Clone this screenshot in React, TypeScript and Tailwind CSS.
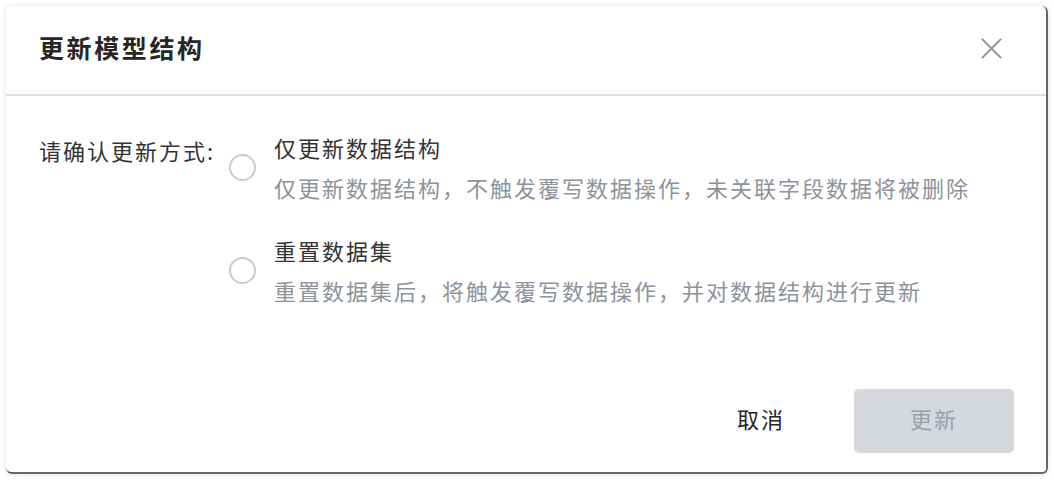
import React, { useState } from 'react';

const options = [
  {
    key: 'structure',
    title: '仅更新数据结构',
    desc: '仅更新数据结构，不触发覆写数据操作，未关联字段数据将被删除',
  },
  {
    key: 'reset',
    title: '重置数据集',
    desc: '重置数据集后，将触发覆写数据操作，并对数据结构进行更新',
  },
];

export default function App() {
  const [mode, setMode] = useState<string | null>(null);

  return (
    <div
      className="w-[1054px] h-[480px] bg-white pt-[6px] pl-[6px]"
      style={{ fontFamily: '"Noto Sans CJK SC", "Noto Sans", sans-serif' }}
    >
      <div className="w-[1042px] h-[468px] bg-white rounded-[6px] border-r-2 border-b-2 border-[#62666d] shadow-[0_0_6px_rgba(0,0,0,0.12)] flex flex-col">
        {/* Header */}
        <div className="h-[90px] flex items-center justify-between pl-[33px] pr-[43px] pb-[4px] border-b-2 border-[#dcdfe4]">
          <h2 className="text-[25px] font-bold text-[#262626] tracking-[2.6px]">更新模型结构</h2>
          <button className="text-[#8f8f8f]">
            <svg width="23" height="23" viewBox="0 0 24 24" fill="none" stroke="currentColor" strokeWidth="2">
              <path d="M2 2L22 22M22 2L2 22" />
            </svg>
          </button>
        </div>

        {/* Body */}
        <div className="flex-1 flex pl-[33px] pt-[35px]">
          <div className="text-[22px] text-[#333] tracking-[2px] leading-[32px] w-[190px] mt-[3px]">请确认更新方式:</div>
          <div className="flex flex-col gap-[31px]">
            {options.map((o) => (
              <label key={o.key} className="flex items-center gap-[18px] cursor-pointer" onClick={() => setMode(o.key)}>
                <span
                  className={`w-[27px] h-[27px] rounded-full border-2 shrink-0 ${
                    mode === o.key ? 'border-[#3b82f6]' : 'border-[#c6cbd3]'
                  }`}
                />
                <span className="flex flex-col gap-[8px]">
                  <span className="text-[22px] text-[#333] tracking-[2px] leading-[32px]">{o.title}</span>
                  <span className="text-[22px] text-[#8d939b] tracking-[2px] leading-[32px]">{o.desc}</span>
                </span>
              </label>
            ))}
          </div>
        </div>

        {/* Footer */}
        <div className="flex justify-end items-center gap-[13px] pr-[32px] pb-[19px]">
          <button className="w-[160px] h-[64px] pb-[5px] text-[22px] text-[#262626] tracking-[2px]">取消</button>
          <button disabled className="w-[160px] h-[64px] pb-[5px] rounded-[5px] bg-[#d5d9de] text-[22px] text-[#9ba1a8] tracking-[2px]">
            更新
          </button>
        </div>
      </div>
    </div>
  );
}
